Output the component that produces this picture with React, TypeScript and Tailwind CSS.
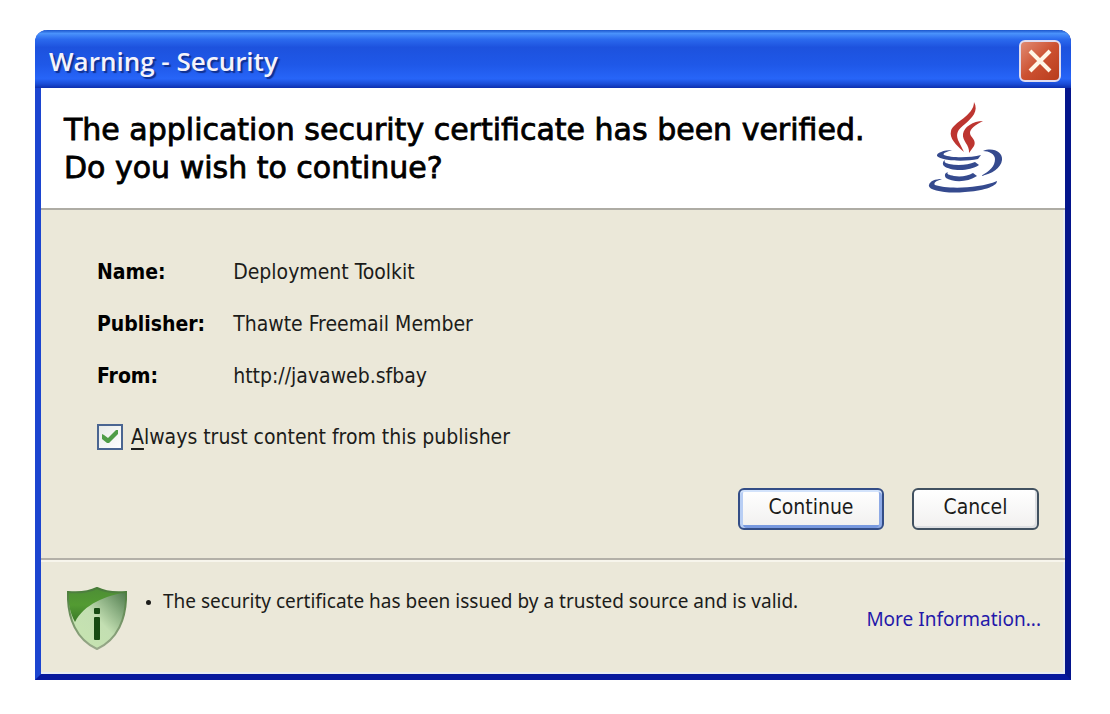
import { useState } from "react";

const details = [
  { label: "Name:", value: "Deployment Toolkit" },
  { label: "Publisher:", value: "Thawte Freemail Member" },
  { label: "From:", value: "http://javaweb.sfbay" },
];

function JavaLogo() {
  return (
    <svg width="76" height="94" viewBox="0 0 76 94" fill="none" className="shrink-0" aria-label="Java" role="img">
      <g fill="#bd3530">
        <path d="M47 3C52 12 45 19 38 25C30 31 29 35 31 41L37 53C29 46 22 39 24 32C26 23 47 17 47 3Z" />
        <path d="M56 22C48 26 43 30 43 34C43 38 50 41 47 47L42 54C43 46 35 42 36 35C37 28 46 22 56 22Z" />
      </g>
      <g fill="#354a8e">
        <path d="M25 51C20 53 15 54 17 56C24 59 43 59 54 56L51 60C38 63 14 62 10 57C9 54 17 51 25 51Z" />
        <path d="M18 61C17 63 18 64 22 65C31 67 41 66 48 63L52 66C42 73 23 72 17 67C15 65 16 62 18 61Z" />
        <path d="M21 73C19 75 22 76 27 77C34 78 41 77 46 74L50 77C40 84 25 83 19 79C17 76 18 74 21 73Z" />
        <path d="M56 52C66 48 76 53 75 61C74 69 65 75 54 77C63 72 68 67 68 60C68 55 62 52 56 52Z" />
        <path d="M15 80C9 82 6 84 8 86C19 90 51 90 70 82C70 88 54 92 38 93C18 95 0 91 2 86C3 82 8 80 15 80Z" />
      </g>
    </svg>
  );
}

function ShieldIcon() {
  return (
    <svg width="60" height="64" viewBox="0 0 60 64" className="shrink-0" aria-label="Information" role="img">
      <defs>
        <linearGradient id="shieldLight" x1="0" y1="1" x2="1" y2="0">
          <stop offset="0" stopColor="#c8e6b0" />
          <stop offset="0.5" stopColor="#c3dfb2" />
          <stop offset="0.72" stopColor="#8db184" />
          <stop offset="1" stopColor="#467344" />
        </linearGradient>
        <linearGradient id="shieldDark" x1="0" y1="0" x2="0" y2="1">
          <stop offset="0" stopColor="#4d8e35" />
          <stop offset="0.5" stopColor="#539b32" />
          <stop offset="1" stopColor="#397829" />
        </linearGradient>
        <linearGradient id="shieldEdge" x1="0" y1="0" x2="0" y2="1">
          <stop offset="0" stopColor="#477c38" />
          <stop offset="1" stopColor="#9aa98c" />
        </linearGradient>
      </defs>
      <path
        d="M1 5C12 6 22 5 30 1C38 5 48 6 59 5C60 32 50 53 30 62C10 53 0 32 1 5Z"
        fill="url(#shieldLight)"
      />
      <path d="M1 5C12 6 22 5 30 1C38 5 48 6 59 5C39 9 17 17 8 35C3 26 1 16 1 5Z" fill="url(#shieldDark)" />
      <path
        d="M1 5C12 6 22 5 30 1C38 5 48 6 59 5C60 32 50 53 30 62C10 53 0 32 1 5Z"
        fill="none"
        stroke="url(#shieldEdge)"
        strokeWidth="2"
      />
      <rect x="27" y="21" width="6" height="6" rx="1" fill="#174b13" />
      <rect x="27" y="30" width="6" height="23" rx="1" fill="#174b13" />
    </svg>
  );
}

export default function App() {
  const [trusted, setTrusted] = useState(true);

  return (
    <main className="min-h-screen bg-white pt-[30px] pr-[39px] pb-8 pl-[35px] font-['DejaVu_Sans_Condensed','DejaVu_Sans',sans-serif] text-[21px] leading-7 text-[#1c1c1a]">
      <section
        role="dialog"
        aria-labelledby="dialog-title"
        className="rounded-t-xl border-x-[6px] border-b-[6px] border-l-[#1c45d0] border-r-[#04158c] border-b-[#06189e]"
      >
        <header className="-mx-1.5 flex h-[58px] items-center justify-between rounded-t-xl bg-[linear-gradient(180deg,#1b55cc_0%,#4a92fb_6%,#2b6aee_16%,#1d52de_30%,#1f58e8_60%,#2765f8_84%,#1a4cd6_93%,#0c2fae_100%)] pr-2.5 pl-3.5 pt-1">
          <h1
            id="dialog-title"
            className="font-['Open_Sans','Noto_Sans',sans-serif] text-[26px] font-semibold text-[#f4f3fb] [text-shadow:2px_2px_1px_#10308f]"
          >
            Warning - Security
          </h1>
          <button
            type="button"
            aria-label="Close"
            className="grid size-[42px] place-items-center rounded-md border-2 border-[#dfdcf0] bg-linear-to-br from-[#e08a72] via-[#cc5030] to-[#b83c1c]"
          >
            <svg width="24" height="24" viewBox="0 0 24 24" stroke="#fff5e6" strokeWidth="4">
              <path d="M2 2L22 22M22 2L2 22" />
            </svg>
          </button>
        </header>

        <div className="bg-[#ebe8d9] shadow-[inset_-2px_-2px_0_#e6ebf2]">
          <div className="flex items-center justify-between gap-6 border-b-2 border-[#aeaca4] bg-white pt-[11px] pr-[62px] pb-[15px] pl-[23px]">
            <h2 className="pt-1.5 font-['DejaVu_Sans',sans-serif] text-3xl leading-[38px] text-black [-webkit-text-stroke:0.8px_black]">
              The application security certificate has been verified.
              <br />
              Do you wish to continue?
            </h2>
            <JavaLogo />
          </div>

          <div className="border-b-2 border-[#b3b0a8] pt-12 pr-[26px] pb-7 pl-14">
            <dl className="grid grid-cols-[auto_1fr] gap-x-7 gap-y-6">
              {details.map(({ label, value }) => (
                <div key={label} className="contents">
                  <dt className="font-bold text-black">{label}</dt>
                  <dd>{value}</dd>
                </div>
              ))}
            </dl>

            <label className="mt-[33px] flex w-fit items-center gap-2">
              <span className="grid size-[26px] place-items-center">
                <input
                  type="checkbox"
                  checked={trusted}
                  onChange={(event) => setTrusted(event.target.checked)}
                  className="peer col-start-1 row-start-1 size-[26px] appearance-none border-2 border-[#4a6591] bg-linear-to-br from-[#e8ebe8] to-white"
                />
                <svg
                  width="16"
                  height="14"
                  viewBox="0 0 16 14"
                  fill="#4f9d47"
                  className="pointer-events-none invisible col-start-1 row-start-1 peer-checked:visible"
                >
                  <path d="M0 4L2 5L6 8L14 0H16V4L7 13H5L0 9Z" />
                </svg>
              </span>
              <span>
                <u className="underline-offset-4">A</u>lways trust content from this publisher
              </span>
            </label>

            <div className="mt-[37px] flex justify-end gap-7">
              <button
                type="button"
                className="h-[42px] w-[146px] rounded-md border-2 border-[#334d86] bg-linear-to-b from-white to-[#f1f0ef] pb-1 shadow-[inset_0_2px_0_#d3e3fb,inset_3px_0_0_#b8cef4,inset_-3px_0_0_#8eaae6,inset_0_-3px_0_#7899df]"
              >
                Continue
              </button>
              <button
                type="button"
                className="h-[42px] w-[127px] rounded-md border-2 border-[#415160] bg-linear-to-b from-white to-[#f1f0ef] pb-1 shadow-[inset_-2px_-2px_0_#dddfe2]"
              >
                Cancel
              </button>
            </div>
          </div>

          <footer className="flex border-t-2 border-[#f7f5ec] pt-[25px] pr-6 pb-[23px] pl-[26px] font-['Noto_Sans','Open_Sans',sans-serif] text-[19px]">
            <ShieldIcon />
            <ul className="ml-9 grow list-disc marker:text-[14px]">
              <li>The security certificate has been issued by a trusted source and is valid.</li>
            </ul>
            <a href="#more" className="self-center whitespace-nowrap text-[#2418aa]">
              More Information...
            </a>
          </footer>
        </div>
      </section>
    </main>
  );
}
